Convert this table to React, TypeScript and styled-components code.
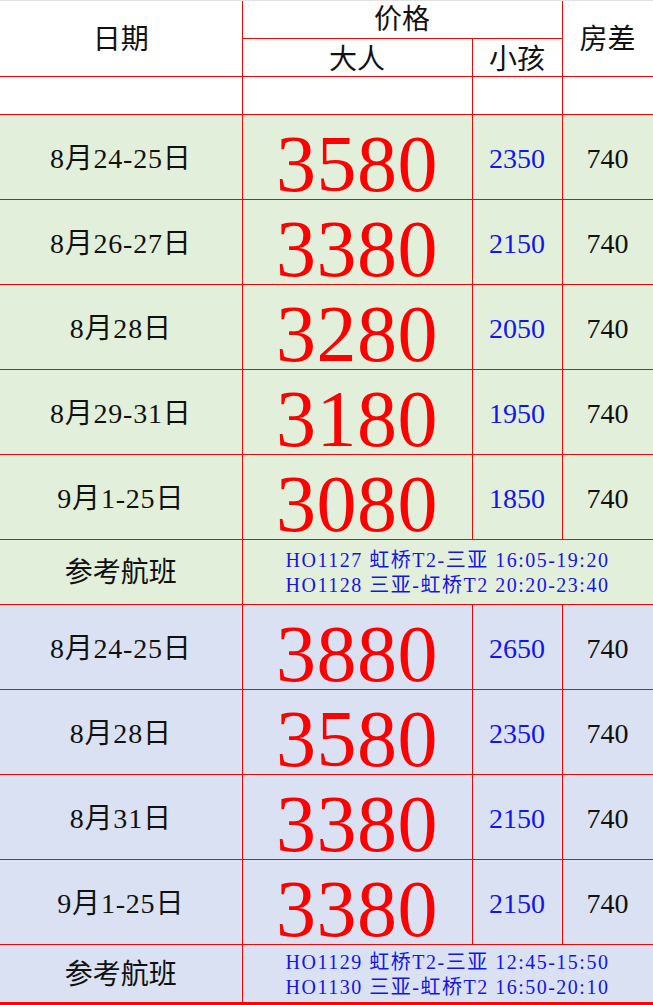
import React from 'react';
import styled, { createGlobalStyle } from 'styled-components';

const GlobalStyle = createGlobalStyle`
  html, body {
    margin: 0;
    padding: 0;
    background: #ffffff;
  }
`;

const LINE = '#ff0000';
const GREEN = '#e2efda';
const BLUE = '#d9e1f2';

type Tone = 'white' | 'green' | 'blue';

const toneColor = (t: Tone) => (t === 'green' ? GREEN : t === 'blue' ? BLUE : '#ffffff');

const Page = styled.div`
  width: 653px;
  border-top: 1px solid #e2e2e2;
  font-family: "Liberation Serif", "Noto Sans CJK SC", serif;
`;

const Table = styled.table`
  width: 653px;
  border-collapse: collapse;
  table-layout: fixed;
`;

const Row = styled.tr<{ $h: number }>`
  height: ${(p) => p.$h}px;
`;

const Cell = styled.td<{ $tone: Tone; $first?: boolean; $last?: boolean; $top?: boolean }>`
  padding: 0;
  text-align: center;
  vertical-align: middle;
  background: ${(p) => toneColor(p.$tone)};
  border: 1px solid ${LINE};
  border-left: ${(p) => (p.$first ? 'none' : `1px solid ${LINE}`)};
  border-top: ${(p) => (p.$top ? 'none' : `1px solid ${LINE}`)};
  border-bottom: ${(p) => (p.$last ? `3px solid ${LINE}` : `1px solid ${LINE}`)};
`;

const HeadText = styled.div<{ $shift?: number }>`
  font-size: 28px;
  line-height: 30px;
  color: #111;
  padding-top: ${(p) => p.$shift ?? 4}px;
`;

const DateText = styled.div`
  font-size: 28px;
  line-height: 30px;
  letter-spacing: 0.8px;
  color: #111;
  padding-top: 5px;
`;

const AdultPrice = styled.div`
  font-size: 80px;
  line-height: 64px;
  letter-spacing: 0.5px;
  color: #ff0000;
  padding-top: 14px;
`;

const ChildPrice = styled.div`
  font-size: 28px;
  line-height: 30px;
  color: #1414f0;
  padding-top: 5px;
`;

const RoomDiff = styled.div`
  font-size: 28px;
  line-height: 30px;
  color: #111;
  padding-top: 5px;
`;

const FlightBox = styled.div`
  display: flex;
  flex-direction: column;
  align-items: center;
  padding-top: 3px;
`;

const FlightLine = styled.div`
  font-size: 20px;
  line-height: 25px;
  letter-spacing: 1.5px;
  color: #1414e8;
  white-space: pre;
`;

type Price = { date: string; adult: string; child: string; room: string };
type Section = { tone: Tone; prices: Price[]; flights: string[]; flightH: number };

const sections: Section[] = [
  {
    tone: 'green',
    prices: [
      { date: '8月24-25日', adult: '3580', child: '2350', room: '740' },
      { date: '8月26-27日', adult: '3380', child: '2150', room: '740' },
      { date: '8月28日', adult: '3280', child: '2050', room: '740' },
      { date: '8月29-31日', adult: '3180', child: '1950', room: '740' },
      { date: '9月1-25日', adult: '3080', child: '1850', room: '740' },
    ],
    flights: ['HO1127 虹桥T2-三亚 16:05-19:20', 'HO1128 三亚-虹桥T2 20:20-23:40'],
    flightH: 65,
  },
  {
    tone: 'blue',
    prices: [
      { date: '8月24-25日', adult: '3880', child: '2650', room: '740' },
      { date: '8月28日', adult: '3580', child: '2350', room: '740' },
      { date: '8月31日', adult: '3380', child: '2150', room: '740' },
      { date: '9月1-25日', adult: '3380', child: '2150', room: '740' },
    ],
    flights: ['HO1129 虹桥T2-三亚 12:45-15:50', 'HO1130 三亚-虹桥T2 16:50-20:10'],
    flightH: 59,
  },
];

const App: React.FC = () => (
  <Page>
    <GlobalStyle />
    <Table>
      <colgroup>
        <col style={{ width: 242 }} />
        <col style={{ width: 230 }} />
        <col style={{ width: 90 }} />
        <col style={{ width: 91 }} />
      </colgroup>
      <tbody>
        <Row $h={37}>
          <Cell $tone="white" $first $top rowSpan={2}>
            <HeadText>日期</HeadText>
          </Cell>
          <Cell $tone="white" $top colSpan={2}>
            <HeadText $shift={2}>价格</HeadText>
          </Cell>
          <Cell $tone="white" $top rowSpan={2}>
            <HeadText>房差</HeadText>
          </Cell>
        </Row>
        <Row $h={38}>
          <Cell $tone="white">
            <HeadText $shift={5}>大人</HeadText>
          </Cell>
          <Cell $tone="white">
            <HeadText $shift={5}>小孩</HeadText>
          </Cell>
        </Row>
        <Row $h={38}>
          <Cell $tone="white" $first />
          <Cell $tone="white" />
          <Cell $tone="white" />
          <Cell $tone="white" />
        </Row>
        {sections.map((s, si) => (
          <React.Fragment key={si}>
            {s.prices.map((p, pi) => (
              <Row $h={85} key={pi}>
                <Cell $tone={s.tone} $first>
                  <DateText>{p.date}</DateText>
                </Cell>
                <Cell $tone={s.tone}>
                  <AdultPrice>{p.adult}</AdultPrice>
                </Cell>
                <Cell $tone={s.tone}>
                  <ChildPrice>{p.child}</ChildPrice>
                </Cell>
                <Cell $tone={s.tone}>
                  <RoomDiff>{p.room}</RoomDiff>
                </Cell>
              </Row>
            ))}
            <Row $h={s.flightH}>
              <Cell $tone={s.tone} $first $last={si === sections.length - 1}>
                <HeadText $shift={3}>参考航班</HeadText>
              </Cell>
              <Cell $tone={s.tone} colSpan={3} $last={si === sections.length - 1}>
                <FlightBox>
                  {s.flights.map((f) => (
                    <FlightLine key={f}>{f}</FlightLine>
                  ))}
                </FlightBox>
              </Cell>
            </Row>
          </React.Fragment>
        ))}
      </tbody>
    </Table>
  </Page>
);

export default App;
